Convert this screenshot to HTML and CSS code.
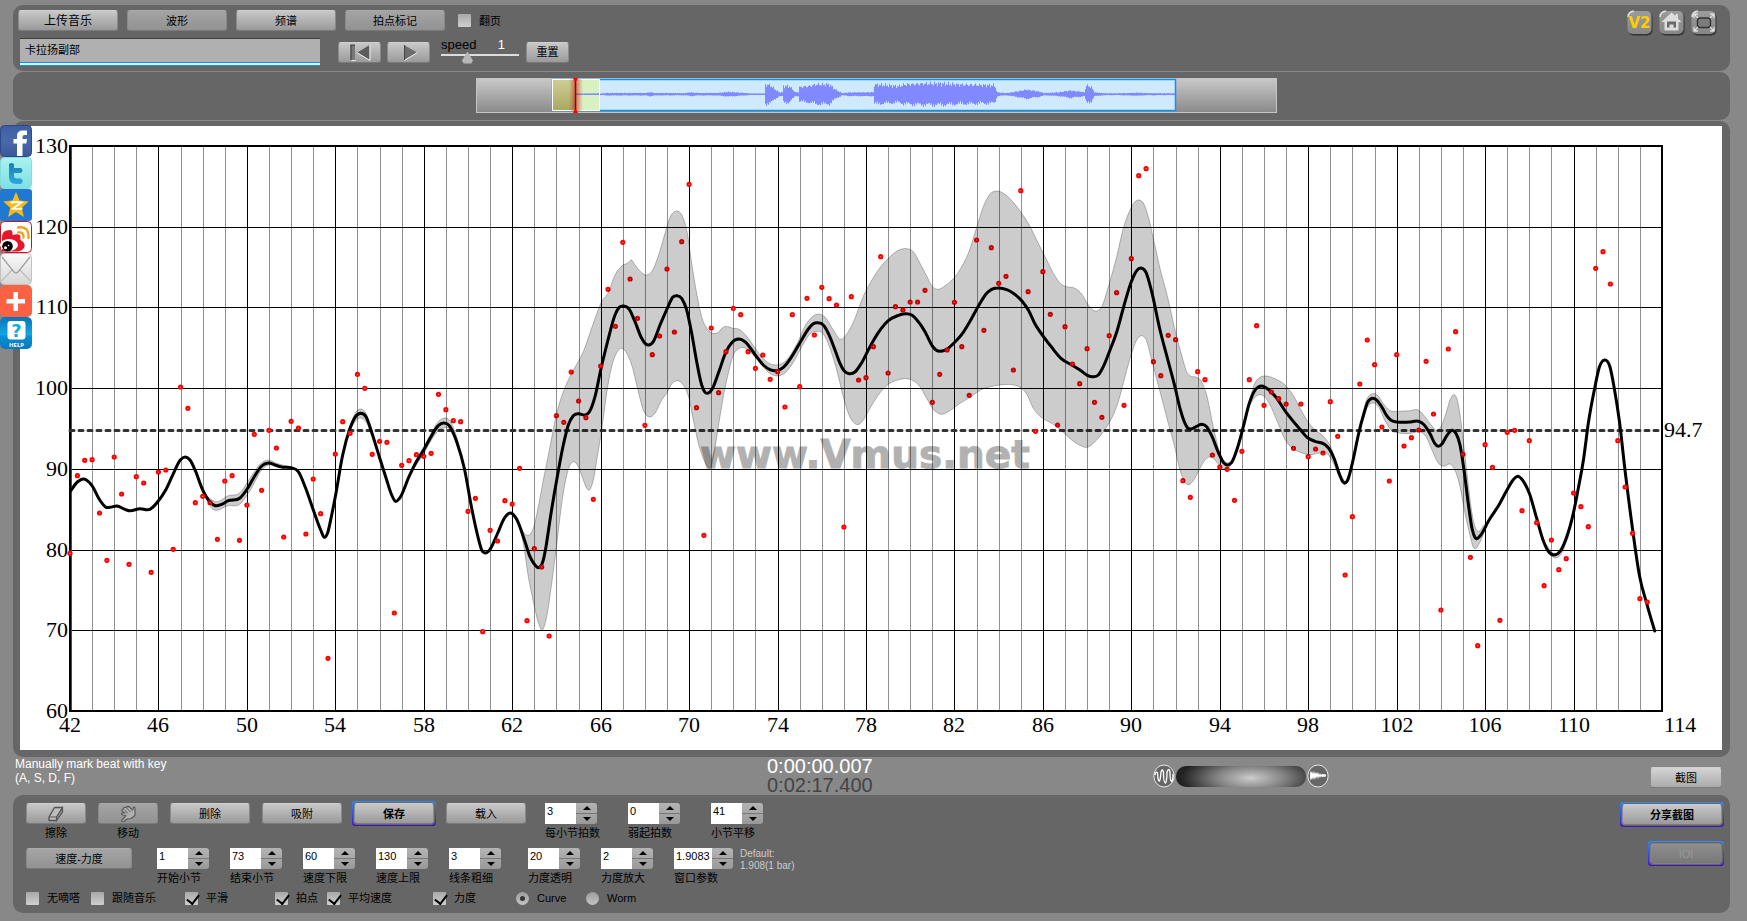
FILE: index.html
```html
<!DOCTYPE html>
<html lang="zh-CN">
<head>
<meta charset="utf-8">
<title>Vmus.net</title>
<link rel="stylesheet" href="styles.css">
</head>
<body>
<svg class="defs" width="0" height="0" aria-hidden="true">
  <defs>
    <linearGradient id="g-fb" x1="0" y1="0" x2="0" y2="1"><stop offset="0" stop-color="#3b5fa3"/><stop offset=".5" stop-color="#4a69ab"/><stop offset="1" stop-color="#3a5899"/></linearGradient>
    <linearGradient id="g-tw" x1="0" y1="0" x2="0" y2="1"><stop offset="0" stop-color="#a9f3f1"/><stop offset="1" stop-color="#7fdfe2"/></linearGradient>
    <linearGradient id="g-t" x1="0" y1="0" x2="0" y2="1"><stop offset="0" stop-color="#1d7fb5"/><stop offset="1" stop-color="#2ba9e0"/></linearGradient>
    <linearGradient id="g-mail" x1="0" y1="0" x2="0" y2="1"><stop offset="0" stop-color="#fafafa"/><stop offset="1" stop-color="#d6d6d6"/></linearGradient>
    <linearGradient id="g-help" x1="0" y1="0" x2="0" y2="1"><stop offset="0" stop-color="#0873b8"/><stop offset=".55" stop-color="#12a6e4"/><stop offset=".6" stop-color="#0590d4"/><stop offset="1" stop-color="#0a78bd"/></linearGradient>
    <linearGradient id="g-grey" x1="0" y1="0" x2="0" y2="1"><stop offset="0" stop-color="#c9c9c9"/><stop offset="1" stop-color="#8a8a8a"/></linearGradient>
    <linearGradient id="g-khaki" x1="0" y1="0" x2="0" y2="1"><stop offset="0" stop-color="#cfcf96"/><stop offset="1" stop-color="#a8a860"/></linearGradient>
    <linearGradient id="g-glow" x1="0" y1="0" x2="1" y2="0"><stop offset="0" stop-color="#c00" stop-opacity="0"/><stop offset=".5" stop-color="#c00" stop-opacity=".5"/><stop offset="1" stop-color="#c00" stop-opacity="0"/></linearGradient>
    <linearGradient id="g-tile" x1="0" y1="0" x2="0" y2="1"><stop offset="0" stop-color="#9c9c9c"/><stop offset="1" stop-color="#868686"/></linearGradient>
  </defs>
</svg>
<main class="app">
  <section class="panel toolbar">
    <div class="tools">
      <div class="tool-row">
        <button class="btn wide large">上传音乐</button>
        <button class="btn wide dim">波形</button>
        <button class="btn wide">频谱</button>
        <button class="btn wide dim">拍点标记</button>
        <label class="tick flip"><input type="checkbox">翻页</label>
      </div>
      <div class="tool-row">
        <input class="song" type="text" value="卡拉扬副部" aria-label="曲名">
        <div class="transport">
          <button class="btn small" aria-label="回到开头"><svg width="24" height="17" viewBox="0 0 24 17"><path d="M3.500 16.500H7.500" stroke="#eee"/><path d="M2.500 1h4.500v15H2.500z" fill="#777"/><path d="M2.500 1h4.500M3 1v15" stroke="#3c3c3c" fill="none"/><path d="M21.500 1v15L9.500 8.500z" fill="#5c5c5c"/><path d="M22 1v15.500L9.500 9" fill="none" stroke="#eee"/></svg></button>
          <button class="btn small" aria-label="播放"><svg width="24" height="17" viewBox="0 0 24 17"><path d="M7 1v15l13-7.500z" fill="#6c6c6c"/><path d="M7.500 1v15" stroke="#444"/><path d="M7.500 16.500L20.500 8.500" stroke="#eee"/></svg></button>
        </div>
        <div class="speed">
          <div class="speed-head"><label for="speed">speed</label><output for="speed">1</output></div>
          <input id="speed" type="range" min="0" max="3.2" step="0.1" value="1">
        </div>
        <button class="btn small">重置</button>
      </div>
    </div>
    <nav class="corner">
      <a href="#v2" aria-label="V2"><svg width="26" height="26" viewBox="0 0 26 26"><rect x="1.500" y="2" width="24" height="23.500" rx="5" fill="#333"/><rect x=".5" y="1" width="24" height="23" rx="5" fill="url(#g-tile)"/><path d="M1 7q0-5 6-6" stroke="#ddd" stroke-width="1.500" fill="none"/><text x="1.500" y="18" class="v2">V2</text></svg></a>
      <a href="#home" aria-label="主页"><svg width="26" height="26" viewBox="0 0 26 26"><rect x="1.500" y="2" width="24" height="23.500" rx="5" fill="#333"/><rect x=".5" y="1" width="24" height="23" rx="5" fill="url(#g-tile)"/><path d="M1 7q0-5 6-6" stroke="#ddd" stroke-width="1.500" fill="none"/><path d="M12.500 2.500L2.500 12h3v7.500q0 1 1 1h12q1 0 1-1V12h3l-3.500-3.500V4h-2.500v2z" fill="#ddd"/><path d="M8 17.500v-6h9v6h-2.500v-3h-4v3z" fill="#6a6a6a"/></svg></a>
      <a href="#fullscreen" aria-label="全屏"><svg width="26" height="26" viewBox="0 0 26 26"><rect x="1.500" y="2" width="24" height="23.500" rx="5" fill="#333"/><rect x=".5" y="1" width="24" height="23" rx="5" fill="url(#g-tile)"/><path d="M1 7q0-5 6-6" stroke="#ddd" stroke-width="1.500" fill="none"/><rect x="6.500" y="8" width="13" height="9.500" rx="2.500" fill="#7c7c7c" stroke="#333" stroke-width="1.400"/><path d="M3 8V4h4M3 4l4 4M19 4h4v4M23 4l-4 4M3 17v4h4M3 21l4-4M23 17v4h-4M23 21l-4-4" fill="none" stroke="#ddd" stroke-width="1.300"/></svg></a>
    </nav>
  </section>

  <section class="panel overview">
    <svg class="wave" viewBox="0 0 801 35" role="img" aria-label="波形总览">
      <rect x=".5" y=".5" width="800" height="34" fill="url(#g-grey)" stroke="#c4c4c4"/>
      <rect x="76.500" y="1.500" width="623" height="31" fill="#cfeaff" stroke="#0d92f2" stroke-width="1.500"/>
      <rect x="76" y="1" width="48" height="32" fill="#d9f0c0"/>
      <rect x="76" y="1" width="24" height="32" fill="url(#g-khaki)"/>
      <path id="wave" fill="#8089ff"/>
      <rect x="76.500" y="1.500" width="47" height="31" fill="none" stroke="#fff"/>
      <rect x="93" y="1" width="14" height="32" fill="url(#g-glow)"/>
      <path d="M99.500 0V34" stroke="#a00000" stroke-width="1.500"/>
      <path d="M97 0h5l-1.500 3h-2zM97 35h5l-1.500-3h-2z" fill="#f00"/>
    </svg>
  </section>

  <section class="panel stage">
    <svg id="chart" class="chart" viewBox="0 0 1702 624" role="img" aria-label="速度曲线"></svg>
    <nav class="share">
      <a href="#facebook" aria-label="Facebook"><svg viewBox="0 0 32 32"><rect x=".5" y=".5" width="31" height="31" rx="4" fill="url(#g-fb)" stroke="#2d4a86"/><path d="M17 31V18.500h-3.500V14H17v-3q0-5.500 6-5.500h4V10h-2.500q-2 0-2 2v2H27l-.7 4.500h-3.800V31z" fill="#fff"/></svg></a>
      <a href="#twitter" aria-label="Twitter"><svg viewBox="0 0 32 32"><rect x=".5" y=".5" width="31" height="31" rx="4" fill="url(#g-tw)" stroke="#86dcdd"/><path d="M9 7q2-2 5 0v4h7q3 2.500 0 5h-7v2.500q0 3 3 3h4q3.500 2.500 0 5.500h-5q-7 0-7-7z" fill="url(#g-t)"/></svg></a>
      <a href="#qzone" aria-label="QZone"><svg viewBox="0 0 32 32"><rect width="32" height="32" rx="3" fill="#1f78d1"/><path d="M16 3l3.600 8.600 9.100.9-6.900 6.200 2.100 9.300L16 23l-7.900 5 2.100-9.300-6.900-6.200 9.100-.9z" fill="#fdb913"/><path d="M10.500 13.500q5-1 11 0l-8.500 6q5 .8 9.500 0" fill="none" stroke="#fff" stroke-width="1.800"/></svg></a>
      <a href="#weibo" aria-label="微博"><svg viewBox="0 0 32 32"><rect x=".5" y=".5" width="31" height="31" rx="4" fill="#fff" stroke="#c8141c"/><path d="M2 16q0-7 8-7 3 0 2.500 5 8-2 8 2-.5 2 0 3 5 3 4 7-2 4-7 4.500H2z" fill="#e6162d"/><ellipse cx="9" cy="24" rx="9" ry="6" fill="#fff"/><circle cx="7.500" cy="25.300" r="5.300" fill="#000"/><circle cx="5.500" cy="26.800" r="1.500" fill="#fff"/><circle cx="8.500" cy="24.500" r=".8" fill="#fff"/><path d="M18 6.500q11-2 10.500 10.500M18 11.500q6-1 5.500 5" fill="none" stroke="#f9a01b" stroke-width="2.400" stroke-linecap="round"/></svg></a>
      <a href="#mail" aria-label="邮件"><svg viewBox="0 0 32 32"><rect x=".5" y=".5" width="31" height="31" rx="4" fill="url(#g-mail)" stroke="#c2c2c2"/><path d="M1.500 28L12 17M30.500 28L20 17" stroke="#bdbdbd" stroke-width="1.200"/><path d="M2 4l12 15q2 2 4 0L30 4" fill="none" stroke="#a4a4a4" stroke-width="1.400"/></svg></a>
      <a href="#more" aria-label="更多"><svg viewBox="0 0 32 32"><rect width="32" height="32" rx="5" fill="#fa6243"/><path d="M13.500 7h4.500v7h7v4.500h-7V26h-4.500v-7.500h-7V14h7z" fill="#fff"/></svg></a>
      <a href="#help" aria-label="帮助"><svg viewBox="0 0 32 32"><rect width="32" height="32" rx="5" fill="url(#g-help)"/><rect x="7.500" y="4" width="18" height="18.500" rx="3" fill="#fff"/><text x="16.500" y="20" class="help-mark">?</text><text x="16.500" y="29.500" class="help-word">HELP</text></svg></a>
    </nav>
  </section>

  <section class="status">
    <p class="hint">Manually mark beat with key<br>(A, S, D, F)</p>
    <p class="clock"><span class="now">0:00:00.007</span><span class="total">0:02:17.400</span></p>
    <div class="zoomer">
      <svg width="22" height="24" viewBox="0 0 22 24"><ellipse cx="11" cy="12" rx="10.200" ry="11" fill="#666" stroke="#e8e8e8"/><path d="M2 11Q3 6.500 4.500 9Q5 18 6.500 17Q7.500 15 8 8Q9.500 4 10.500 8Q10.500 19 12.500 19Q14 17 14 8Q16 3 17 8Q17 17 18.500 17.500Q20 16 20 10" fill="none" stroke="#fff" stroke-width="1.300"/></svg>
      <div class="dial" role="slider" aria-label="缩放" aria-valuenow="50" tabindex="0"></div>
      <svg width="22" height="24" viewBox="0 0 22 24"><ellipse cx="11" cy="12" rx="10.200" ry="11" fill="#666" stroke="#e8e8e8"/><path d="M3 7v10l1-3 1 2 1-3 1 3 1-3 1 2 1-3 1 3 1-3 1 2 1-2 1 1 4-.5v-2l-4-.5-1 1-1-2-1 2-1-3-1 2-1-2-1 2-1-3-1 3-1-3-1 2z" fill="#fff"/></svg>
    </div>
    <button class="btn shot">截图</button>
  </section>

  <section class="panel controls">
    <div class="control-rows">
      <div class="row">
        <div class="captioned"><button id="erase" class="btn mid"><svg width="18" height="16" viewBox="0 0 18 16"><path d="M2 11L7.500 1.500h8L10 11l-.5 3.500H2z" fill="#bdbdbd" stroke="#555" stroke-width="1.400" stroke-linejoin="round"/><path d="M2 11h7.500M9.500 11L15.500 2v4L9.500 14.500z" fill="#999" stroke="#555" stroke-width="1.200"/></svg></button><label for="erase">擦除</label></div>
        <div class="captioned"><button id="move" class="btn mid dim"><svg width="18" height="18" viewBox="0 0 18 18"><path d="M3 16.500q-.5-1 .5-2L7 10.500 3.500 10Q1.500 8.500 3.500 8L6 8Q1 5.500 4 4q.5-2 3-1.500Q9 .5 11 2.500l2.500 2.500Q14.500 4 14.500 2q2 0 1.500 2.500v6L12 13.500l-4 .5-3 2.500z" fill="#b0b0b0" stroke="#5c5c5c" stroke-width="1.200" stroke-linejoin="round"/><path d="M5 4.500l4 4M7.500 3l4 4" stroke="#5c5c5c"/></svg></button><label for="move">移动</label></div>
        <button class="btn std">删除</button>
        <button class="btn std">吸附</button>
        <span class="focus"><button class="btn std strong">保存</button></span>
        <button class="btn std">载入</button>
        <div class="steppers loose">
          <div class="captioned"><div class="stepper"><input id="n1" type="text" value="3"><div class="arrows"><button class="up" aria-label="增加"></button><button class="down" aria-label="减少"></button></div></div><label for="n1">每小节拍数</label></div>
          <div class="captioned"><div class="stepper"><input id="n2" type="text" value="0"><div class="arrows"><button class="up" aria-label="增加"></button><button class="down" aria-label="减少"></button></div></div><label for="n2">弱起拍数</label></div>
          <div class="captioned"><div class="stepper"><input id="n3" type="text" value="41"><div class="arrows"><button class="up" aria-label="增加"></button><button class="down" aria-label="减少"></button></div></div><label for="n3">小节平移</label></div>
        </div>
      </div>
      <div class="row">
        <button class="btn mode dim">速度-力度</button>
        <div class="steppers first">
          <div class="captioned"><div class="stepper"><input id="n4" type="text" value="1"><div class="arrows"><button class="up" aria-label="增加"></button><button class="down" aria-label="减少"></button></div></div><label for="n4">开始小节</label></div>
          <div class="captioned"><div class="stepper"><input id="n5" type="text" value="73"><div class="arrows"><button class="up" aria-label="增加"></button><button class="down" aria-label="减少"></button></div></div><label for="n5">结束小节</label></div>
          <div class="captioned"><div class="stepper"><input id="n6" type="text" value="60"><div class="arrows"><button class="up" aria-label="增加"></button><button class="down" aria-label="减少"></button></div></div><label for="n6">速度下限</label></div>
          <div class="captioned"><div class="stepper"><input id="n7" type="text" value="130"><div class="arrows"><button class="up" aria-label="增加"></button><button class="down" aria-label="减少"></button></div></div><label for="n7">速度上限</label></div>
          <div class="captioned"><div class="stepper"><input id="n8" type="text" value="3"><div class="arrows"><button class="up" aria-label="增加"></button><button class="down" aria-label="减少"></button></div></div><label for="n8">线条粗细</label></div>
        </div>
        <div class="steppers second">
          <div class="captioned"><div class="stepper"><input id="n9" type="text" value="20"><div class="arrows"><button class="up" aria-label="增加"></button><button class="down" aria-label="减少"></button></div></div><label for="n9">力度透明</label></div>
          <div class="captioned"><div class="stepper"><input id="n10" type="text" value="2"><div class="arrows"><button class="up" aria-label="增加"></button><button class="down" aria-label="减少"></button></div></div><label for="n10">力度放大</label></div>
          <div class="captioned"><div class="stepper long"><input id="n11" type="text" value="1.9083"><div class="arrows"><button class="up" aria-label="增加"></button><button class="down" aria-label="减少"></button></div></div><label for="n11">窗口参数</label></div>
        </div>
        <p class="default">Default:<br>1.908(1 bar)</p>
      </div>
      <div class="options">
        <label class="tick"><input type="checkbox">无嘀嗒</label>
        <label class="tick"><input type="checkbox">跟随音乐</label>
        <label class="tick"><input type="checkbox" checked>平滑</label>
        <label class="tick"><input type="checkbox" checked>拍点</label>
        <label class="tick"><input type="checkbox" checked>平均速度</label>
        <label class="tick"><input type="checkbox" checked>力度</label>
        <label class="tick"><input type="radio" name="shape" checked>Curve</label>
        <label class="tick"><input type="radio" name="shape">Worm</label>
      </div>
    </div>
    <div class="export">
      <span class="focus"><button class="btn wide strong">分享截图</button></span>
      <span class="focus"><button class="btn export-small" disabled>IOI</button></span>
    </div>
  </section>
</main>
<script src="script.js"></script>
</body>
</html>
```
FILE: styles.css
```css
* { box-sizing: border-box; }
body {
  margin: 0;
  background: #888;
  color: #000;
  font: 11px/16px "Liberation Sans", "Noto Sans CJK SC", sans-serif;
}
p { margin: 0; }
button, input { font: inherit; color: inherit; }
.defs { position: absolute; }
.app {
  display: flex;
  flex-direction: column;
  gap: 1px;
  min-height: 100vh;
  padding: 5px 17px 7px 13px;
}
.panel { background: #666; border-radius: 10px; }

/* buttons */
.btn {
  display: flex;
  align-items: center;
  justify-content: center;
  height: 21px;
  padding: 0;
  border: 1px solid #8a8a8a;
  border-top-color: #cfcfcf;
  border-bottom-color: #7a7a7a;
  border-radius: 3px;
  background: linear-gradient(#c8c8c8, #9a9a9a);
  line-height: 16px;
  white-space: nowrap;
}
.btn svg { display: block; }
.dim { background: linear-gradient(#a4a4a4, #929292); border-top-color: #aaa; }
.large { font-size: 12px; }
.wide { width: 100px; }
.small { width: 43px; }
.mid { width: 60px; }
.std { width: 80px; }
.mode { width: 106px; }
.shot { width: 72px; background: linear-gradient(#d4d4d4, #ababab); }
.export-small { width: 72px; }
.strong { font-weight: bold; }
.btn:disabled { background: linear-gradient(#8e8e8e, #787878); border-color: #808080; color: #999; }
.focus {
  padding: 2px;
  border-radius: 3px;
  background: linear-gradient(#2f8cff, #4010c8);
}
.focus .btn { box-shadow: 0 0 0 1px #666; }

/* toolbar */
.toolbar {
  display: flex;
  justify-content: space-between;
  align-items: flex-start;
  padding: 5px 12px 5px 5px;
}
.tools { display: flex; flex-direction: column; gap: 7px; }
.tool-row { display: flex; align-items: center; gap: 9px; }
.song {
  width: 300px;
  height: 28px;
  margin-left: 2px;
  padding: 0 5px 6px;
  border: 0;
  border-top: 1px solid #3f3f3f;
  border-bottom: 1px solid #0d92f2;
  outline: none;
  background: #b0b0b0;
  box-shadow: inset 0 -2px #e4f3ff, inset 0 -3px #0d92f2;
}
.transport { display: flex; gap: 6px; margin-left: 9px; }
.speed { width: 80px; margin: -4px -4px 0 2px; }
.speed-head {
  display: flex;
  justify-content: space-between;
  padding-right: 16px;
  font-size: 13px;
  line-height: 15px;
}
.speed output { color: #fff; }
.speed input {
  display: block;
  width: 78px;
  height: 12px;
  margin: 0;
  appearance: none;
  background: linear-gradient(#ddd, #ddd) 0 2px / 100% 2px no-repeat;
}
.speed input::-webkit-slider-thumb {
  appearance: none;
  width: 11px;
  height: 12px;
  background: #b8b8b8;
  clip-path: polygon(50% 0, 100% 75%, 85% 100%, 15% 100%, 0 75%);
}
.corner { display: flex; gap: 6px; padding-right: 1px; }
.corner svg { display: block; }
.v2 { font: bold 15px "DejaVu Sans", sans-serif; fill: #fc0; }

/* check boxes and radio buttons */
.tick { display: flex; align-items: center; gap: 8px; white-space: nowrap; }
.tick input {
  flex: none;
  width: 13px;
  height: 13px;
  margin: 0;
  appearance: none;
  background: linear-gradient(#a8a8a8, #cfcfcf);
  border-radius: 1px;
}
.tick input[type="radio"] { border-radius: 50%; background: linear-gradient(#9c9c9c, #c4c4c4); }
.tick input[type="checkbox"]:checked::after {
  content: "";
  display: block;
  width: 6px;
  height: 10px;
  margin: 0 0 0 4px;
  border: solid #000;
  border-width: 0 2px 2px 0;
  transform: rotate(38deg);
}
.tick input[type="radio"]:checked::after {
  content: "";
  display: block;
  width: 5px;
  height: 5px;
  margin: 4px;
  border-radius: 50%;
  background: #333;
}
.flip { margin-left: 4px; }

/* overview wave */
.overview { display: flex; justify-content: center; padding: 6px 0 7px 10px; }
.wave { width: 801px; max-width: 100%; display: block; }

/* chart */
.stage { position: relative; padding: 5px 8px 7px 7px; }
.chart { display: block; width: 100%; background: #fff; }
.grid-minor { stroke: #909090; stroke-width: 1; }
.grid-major { stroke: #000; stroke-width: 1; }
.frame { fill: none; stroke: #000; stroke-width: 2; }
.start { stroke: #f00; stroke-width: 1; }
.average { stroke: #333; stroke-width: 3; stroke-dasharray: 4 5; stroke-linecap: round; }
.band { fill: rgba(0, 0, 0, .2); stroke: rgba(0, 0, 0, .25); stroke-width: 1; }
.curve { fill: none; stroke: #000; stroke-width: 3; stroke-linejoin: round; stroke-linecap: round; }
.beat { fill: #f99; stroke: #f00; stroke-width: 2; }
.axis { font: 22px "Liberation Serif", serif; fill: #000; }
.middle { text-anchor: middle; }
.end { text-anchor: end; }
.watermark { font: bold 39px "DejaVu Sans", sans-serif; fill: #000; stroke: #000; stroke-width: 1; opacity: .3; }
.share {
  position: absolute;
  left: -13px;
  top: 4px;
  width: 32px;
  display: flex;
  flex-direction: column;
}
.share svg { display: block; width: 32px; height: 32px; }
.help-mark { font: bold 18px "DejaVu Sans", sans-serif; fill: #12b0d8; text-anchor: middle; }
.help-word { font: bold 6px "Open Sans", sans-serif; fill: #fff; text-anchor: middle; }

/* status strip */
.status {
  display: grid;
  grid-template-columns: 752px 22% auto auto;
  align-items: start;
  margin: -1px 0;
  padding: 0 8px 0 2px;
  color: #fff;
}
.hint { font-size: 12px; line-height: 14px; }
.clock { display: flex; flex-direction: column; font-size: 20px; line-height: 19px; }
.total { color: #444; }
.zoomer { display: flex; align-items: center; gap: 1px; padding: 7px 0 0 10px; }
.dial {
  width: 130px;
  height: 21px;
  border-radius: 10px;
  background: radial-gradient(ellipse 70px 24px at 75px 12px, #ccc, #808080 50%, #222);
}
.shot { justify-self: end; margin-top: 10px; color: #000; }

/* controls */
.controls {
  display: flex;
  justify-content: space-between;
  align-items: flex-start;
  padding: 8px 6px 7px 13px;
}
.control-rows { display: flex; flex-direction: column; gap: 7px; }
.row { display: flex; align-items: flex-start; gap: 12px; }
.row .focus { margin: -2px; }
.captioned { display: flex; flex-direction: column; align-items: center; }
.captioned label { height: 17px; line-height: 18px; white-space: nowrap; }
.steppers { display: flex; }
.steppers .captioned { width: 52px; }
.loose { gap: 31px; margin-left: 7px; }
.first { gap: 21px; margin-left: 13px; }
.second { gap: 21px; margin-left: 15px; }
.row .steppers label { align-self: flex-start; }
.stepper { display: flex; align-self: flex-start; height: 21px; }
.stepper input {
  width: 31px;
  height: 21px;
  padding: 0 2px 5px;
  border: 0;
  background: #fff;
}
.long input { width: 38px; }
.arrows {
  display: flex;
  flex-direction: column;
  width: 21px;
  border-radius: 0 3px 3px 0;
  background: linear-gradient(#b4b4b4, #999);
}
.arrows button {
  display: flex;
  flex: 1;
  align-items: center;
  justify-content: center;
  padding: 0;
  border: 0;
  background: none;
}
.arrows .down { border-top: 1px solid #777; }
.arrows button::before { content: ""; border: 4px solid transparent; border-top-width: 0; border-bottom: 4px solid #000; }
.arrows .down::before { border-bottom: 0; border-top: 4px solid #000; }
.default { padding-left: 2px; color: #ccc; font-size: 10px; line-height: 12px; }
.options {
  display: grid;
  grid-template-columns: 65px 94px 90px 52px 106px 83px 70px auto;
  margin-top: -3px;
}
.export { display: flex; flex-direction: column; align-items: flex-end; gap: 15px; }
.export .focus { margin-top: -1px; }
```
FILE: script.js
```js
const NS = 'http://www.w3.org/2000/svg';
const chart = document.getElementById('chart');

function add(tag, attrs, text) {
  const el = document.createElementNS(NS, tag);
  for (const key in attrs) el.setAttribute(key, attrs[key]);
  if (text !== undefined) el.textContent = text;
  chart.appendChild(el);
}

/* Data units are thirds of a chart unit, measured from the plot's corner region. */
const px = v => v / 3 + 40;
const py = v => v / 3 + 14;

const LEFT = 50, RIGHT = 1642, TOP = 20, BOTTOM = 585;
const barX = bar => LEFT + (bar - 42) * (RIGHT - LEFT) / 72;
const tempoY = bpm => TOP + (130 - bpm) * (BOTTOM - TOP) / 70;

const beats = [
  1240,1007,961,959,1119,1261,951,1062,1273,1010,1029,1297,996,990,1228,741,805,1088,1069,1088,
  1198,1023,1007,1201,1095,883,1051,871,924,1191,844,864,1182,1017,1121,1555,942,845,880,703,
  745,943,904,907,1419,976,962,944,949,940,763,809,842,845,1114,1075,1475,1171,1203,1082,
  1092,985,1442,1226,1281,1488,827,847,696,783,833,1078,678,448,559,307,417,535,856,644,
  588,387,576,305,133,803,1186,564,758,635,505,524,635,685,645,718,695,801,524,740,
  475,585,442,476,495,1161,470,720,713,620,350,699,500,510,486,486,451,787,703,630,
  487,620,766,300,571,323,430,409,690,152,455,874,395,523,855,560,672,731,626,787,
  832,587,458,796,356,107,86,665,707,586,599,1022,1072,695,719,945,981,988,1081,934,
  719,557,796,756,776,792,925,792,950,927,939,785,889,1305,1130,732,600,674,861,1023,
  644,918,893,870,664,822,1410,627,575,943,1252,1517,914,982,1441,877,871,1112,902,1148,
  1337,1200,1289,1256,1059,1100,1160,385,335,432,902,1041,1180,1376,1386
];

const mean = `32,1052 52,1026 72,1017 96,1037 118,1078 138,1102 150,1102 172,1098 190,1106 207,1112 240,1106 270,1108
295,1083 317,1050 339,1003 361,960 376,951 390,960 406,992 428,1050 450,1086 466,1097 485,1093 505,1082 540,1074
561,1048 583,1010 605,978 625,969 645,975 665,981 693,983 715,995 737,1045 760,1110 782,1170 793,1192 804,1175
815,1125 826,1070 848,945 870,865 885,832 902,820 918,830 936,880 958,950 980,1020 995,1065 1006,1084 1020,1073
1047,1010 1069,965 1091,930 1113,890 1135,857 1152,849 1168,857 1190,905 1213,985 1235,1105 1255,1195 1265,1230
1275,1239 1290,1228 1312,1182 1334,1133 1352,1119 1370,1138 1395,1205 1410,1250 1425,1275 1436,1283 1447,1270
1458,1220 1470,1140 1490,1020 1510,915 1525,855 1540,827 1555,821 1575,825 1588,816 1605,770 1622,690 1644,600
1665,525 1678,502 1691,498 1708,508 1725,545 1745,595 1757,612 1766,615 1780,605 1800,555 1822,505 1838,472
1851,467 1865,475 1880,510 1895,580 1910,665 1925,735 1934,756 1943,760 1956,748 1975,700 1997,638 2015,608
2037,597 2055,605 2086,645 2110,675 2130,689 2150,692 2170,682 2195,650 2220,608 2245,567 2260,551 2274,548
2290,555 2305,580 2325,630 2340,670 2353,693 2368,701 2385,696 2405,668 2430,620 2455,578 2485,542 2510,528
2538,521 2555,525 2575,545 2595,575 2617,618 2628,630 2641,634 2660,628 2683,608 2710,577 2735,535 2760,490
2778,462 2795,448 2815,444 2840,449 2860,460 2885,482 2905,510 2925,552 2950,589 2975,622 3003,655 3037,676
3060,690 3082,706 3098,710 3115,705 3130,680 3150,630 3169,580 3191,500 3214,425 3230,392 3243,384 3258,397
3275,455 3300,570 3325,665 3346,745 3360,805 3375,850 3383,864 3392,867 3410,859 3426,853 3440,860 3455,887
3475,937 3490,967 3503,975 3515,967 3532,925 3550,860 3568,790 3582,755 3595,741 3606,738 3620,745 3645,768
3679,818 3720,868 3744,894 3765,904 3792,912 3807,926 3823,957 3839,1005 3848,1025 3854,1029 3863,1020 3877,970
3896,880 3912,820 3922,789 3937,775 3951,781 3966,802 3980,827 3993,841 4011,846 4048,846 4077,844 4092,854
4111,883 4124,910 4135,919 4145,913 4161,886 4178,871 4189,882 4200,915 4212,990 4226,1100 4236,1165 4244,1191
4250,1196 4260,1188 4289,1137 4315,1098 4341,1050 4357,1023 4373,1009 4388,1021 4409,1063 4430,1135 4451,1205
4467,1237 4482,1245 4501,1233 4519,1194 4540,1120 4555,1045 4571,955 4585,850 4603,750 4618,682 4634,660
4650,681 4662,740 4679,850 4695,990 4718,1170 4739,1310 4760,1390 4784,1473`;

/* Each band: upper edge, lower edge. */
const bands = [
  [`440,1068 466,1085 505,1067 540,1058 570,1015 605,968 625,960 650,970 693,981`,
   `440,1075 455,1105 470,1111 500,1098 540,1092 570,1052 605,990 625,975 650,979 693,984`],
  [`870,860 885,820 902,807 918,820 940,890`, `870,872 885,845 902,834 918,845 940,898`],
  [`1060,975 1091,920 1113,880 1135,845 1152,834 1168,840 1190,890 1213,985`,
   `1060,988 1091,942 1113,902 1135,872 1152,864 1175,873 1195,925 1213,990`],
  [`1375,1145 1390,1176 1405,1186 1420,1165 1435,1100 1450,1020 1470,920 1490,820 1510,755 1535,700 1570,635
1600,550 1625,485 1644,460 1665,405 1685,378 1708,365 1712,360 1725,375 1745,398 1760,405 1775,395 1795,348
1815,280 1830,232 1843,215 1855,214 1868,230 1882,280 1895,370 1910,460 1925,530 1940,565 1955,578 1975,577
1985,565 2005,560 2015,564 2040,569 2065,595 2095,638 2120,665 2150,675 2180,660 2210,613 2240,550 2260,528
2276,522 2295,531 2320,570 2341,598 2365,575 2385,535 2405,480 2430,430 2455,390 2485,355 2515,331 2540,326
2560,335 2580,370 2600,408 2615,437 2635,448 2655,437 2683,413 2705,380 2725,340 2750,262 2770,200 2790,162
2810,153 2835,163 2860,187 2885,220 2905,250 2930,300 2960,360 2985,408 3003,432 3020,440 3045,445 3065,462
3085,495 3105,513 3125,500 3148,430 3170,350 3190,265 3210,210 3225,185 3237,180 3250,189 3265,230 3280,295
3300,385 3325,480 3345,570 3365,645 3380,695 3390,707 3410,712 3425,725 3440,765 3460,860 3480,940 3500,968 3515,965`,
   `1375,1145 1390,1210 1405,1310 1420,1385 1435,1447 1447,1470 1460,1430 1475,1330 1490,1215 1500,1130 1515,1030
1528,980 1540,965 1555,980 1570,1020 1580,1045 1588,1050 1600,1020 1612,950 1625,870 1640,760 1655,680 1670,638
1686,625 1700,640 1715,675 1735,755 1750,810 1768,831 1785,820 1805,780 1822,757 1835,732 1852,722 1870,735
1887,775 1900,840 1915,910 1930,955 1943,982 1952,983 1962,940 1975,860 1990,770 2005,700 2020,645 2035,627
2052,623 2070,635 2095,662 2125,697 2150,708 2170,703 2200,667 2230,612 2250,582 2270,574 2290,582 2310,625
2330,690 2350,770 2365,820 2380,846 2393,854 2410,840 2430,805 2455,765 2485,733 2510,721 2538,716 2560,722
2580,740 2600,775 2620,808 2645,823 2665,815 2700,790 2730,772 2760,751 2790,740 2820,735 2855,734 2880,742
2900,762 2920,805 2945,833 2975,850 3005,872 3035,900 3060,916 3082,922 3105,905 3130,875 3155,835 3175,785
3195,710 3215,640 3230,600 3245,587 3257,597 3275,660 3300,755 3325,850 3345,925 3360,990 3375,1027 3387,1034
3400,1022 3420,985 3440,955 3450,951 3460,955 3480,978 3500,988 3515,970`],
  [`3550,855 3568,785 3582,735 3600,712 3615,708 3640,714 3678,738 3702,770 3723,810 3744,845 3765,870 3786,885
3812,920 3838,995 3854,1025`,
   `3550,862 3568,800 3582,775 3600,764 3615,772 3630,795 3650,840 3676,900 3697,925 3723,938 3750,944 3781,939
3802,941 3823,975 3838,1010 3854,1036`],
  [`3896,875 3922,775 3937,761 3954,767 3969,790 3990,812 4011,814 4048,812 4077,811 4095,830 4116,858 4132,872
4144,858 4158,820 4171,778 4183,764 4191,777 4205,860 4221,1000 4236,1120 4247,1165 4254,1174 4270,1158 4283,1142`,
   `3896,885 3922,802 3937,789 3954,798 3975,842 3993,870 4017,879 4058,879 4079,875 4098,890 4116,930 4132,965
4147,978 4158,977 4168,972 4182,985 4200,1040 4215,1120 4231,1190 4239,1220 4246,1226 4257,1212 4273,1175 4283,1148`],
  [`4456,1210 4482,1240 4505,1225 4525,1178`, `4456,1215 4482,1253 4505,1240 4525,1190`]
];

const parse = s => s.trim().split(/\s+/).map(p => {
  const [x, y] = p.split(',').map(Number);
  return [px(x), py(y)];
});

/* Cubic through points ordered by x, with the slope of the local parabola at each point. */
function cubic(pts) {
  const n = pts.length, slope = [], m = [];
  for (let i = 0; i < n - 1; i++) slope.push((pts[i + 1][1] - pts[i][1]) / (pts[i + 1][0] - pts[i][0]));
  for (let i = 0; i < n; i++) {
    if (i === 0) m.push(slope[0]);
    else if (i === n - 1) m.push(slope[n - 2]);
    else {
      const h0 = pts[i][0] - pts[i - 1][0], h1 = pts[i + 1][0] - pts[i][0];
      m.push((slope[i - 1] * h1 + slope[i] * h0) / (h0 + h1));
    }
  }
  const out = [];
  for (let i = 0; i < n - 1; i++) {
    const h = (pts[i + 1][0] - pts[i][0]) / 3;
    out.push([[pts[i][0] + h, pts[i][1] + m[i] * h], [pts[i + 1][0] - h, pts[i + 1][1] - m[i + 1] * h], pts[i + 1]]);
  }
  return out;
}
const fmt = p => p[0].toFixed(1) + ' ' + p[1].toFixed(1);
function forward(pts) {
  return cubic(pts).map(c => 'C' + c.map(fmt).join(' ')).join('');
}
function backward(pts) {
  const c = cubic(pts);
  let d = '';
  for (let i = c.length - 1; i >= 0; i--) d += 'C' + [c[i][1], c[i][0], pts[i]].map(fmt).join(' ');
  return d;
}

for (let bar = 43; bar < 114; bar++) {
  const x = Math.round(barX(bar)) + 0.5;
  if ((bar - 42) % 4) add('path', { class: 'grid-minor', d: `M${x} ${TOP}V${BOTTOM}` });
}
for (let bar = 46; bar < 114; bar += 4) {
  const x = Math.round(barX(bar)) + 0.5;
  add('path', { class: 'grid-major', d: `M${x} ${TOP}V${BOTTOM}` });
}
for (let bpm = 70; bpm < 130; bpm += 10) {
  const y = Math.round(tempoY(bpm)) + 0.5;
  add('path', { class: 'grid-major', d: `M${LEFT} ${y}H${RIGHT}` });
}
add('rect', { class: 'frame', x: LEFT, y: TOP, width: RIGHT - LEFT, height: BOTTOM - TOP });
add('path', { class: 'start', d: `M${LEFT + 1.5} ${TOP + 1}V${BOTTOM - 1}` });
add('text', { class: 'watermark', x: 680, y: 342 }, 'www.Vmus.net');
add('path', { class: 'average', d: `M${LEFT} 304.5H${RIGHT}` });

const line = parse(mean);
add('path', { class: 'curve', d: 'M' + fmt(line[0]) + forward(line) });
beats.forEach((v, i) => add('circle', { class: 'beat', cx: (LEFT + i * (RIGHT - LEFT) / 216).toFixed(1), cy: py(v).toFixed(1), r: 1.6 }));
for (const [top, bottom] of bands) {
  const a = parse(top), b = parse(bottom);
  add('path', { class: 'band', d: 'M' + fmt(a[0]) + forward(a) + 'L' + fmt(b[b.length - 1]) + backward(b) + 'Z' });
}

for (let bpm = 60; bpm <= 130; bpm += 10) add('text', { class: 'axis end', x: 48, y: Math.round(tempoY(bpm)) + 7 }, bpm);
for (let bar = 42; bar < 114; bar += 4) add('text', { class: 'axis middle', x: Math.round(barX(bar)), y: 606 }, bar);
add('text', { class: 'axis', x: 1644, y: 606 }, '114');
add('text', { class: 'axis', x: 1644, y: 311 }, '94.7');

/* Wave overview: loudness envelope as [x, half height]. */
const env = [[100,.6],[126,.8],[130,1.2],[170,1.2],[174,2.2],[178,1.2],[208,1],[214,2],[222,1.2],[240,1.2],[252,2.4],[260,1.8],[275,.7],
  [288,.7],[289,11],[294,10],[299,5],[303,2],[306,2],[307,9],[313,9],[319,2],[322,2],[323,8],[332,9],[340,11],[353,11],[359,5],[366,1],
  [372,1.8],[397,2],[398,11],[412,10],[422,9],[428,11],[450,12],[466,12],[480,11],[518,10],[521,2],[530,1],[541,3],[550,5],[562,3],
  [568,1],[583,2],[594,4],[608,2],[610,10],[615,8],[618,2],[627,1],[640,.8],[663,1.5],[668,1],[699,.8]];
function loud(x) {
  for (let i = 1; i < env.length; i++) {
    if (x <= env[i][0]) {
      const [x0, a] = env[i - 1], [x1, b] = env[i];
      return a + (b - a) * (x - x0) / (x1 - x0);
    }
  }
  return 0.8;
}
let wave = '';
for (let x = 100; x < 699; x++) {
  const a = loud(x);
  const up = a * (0.85 + 0.22 * Math.sin(x * 2.3) * Math.sin(x * 0.9 + 1));
  const down = a * (0.85 + 0.22 * Math.sin(x * 1.7 + 2) * Math.sin(x * 1.1));
  wave += `M${x} ${(16 - up).toFixed(1)}h1V${(16.4 + down).toFixed(1)}h-1z`;
}
document.getElementById('wave').setAttribute('d', wave);
```
